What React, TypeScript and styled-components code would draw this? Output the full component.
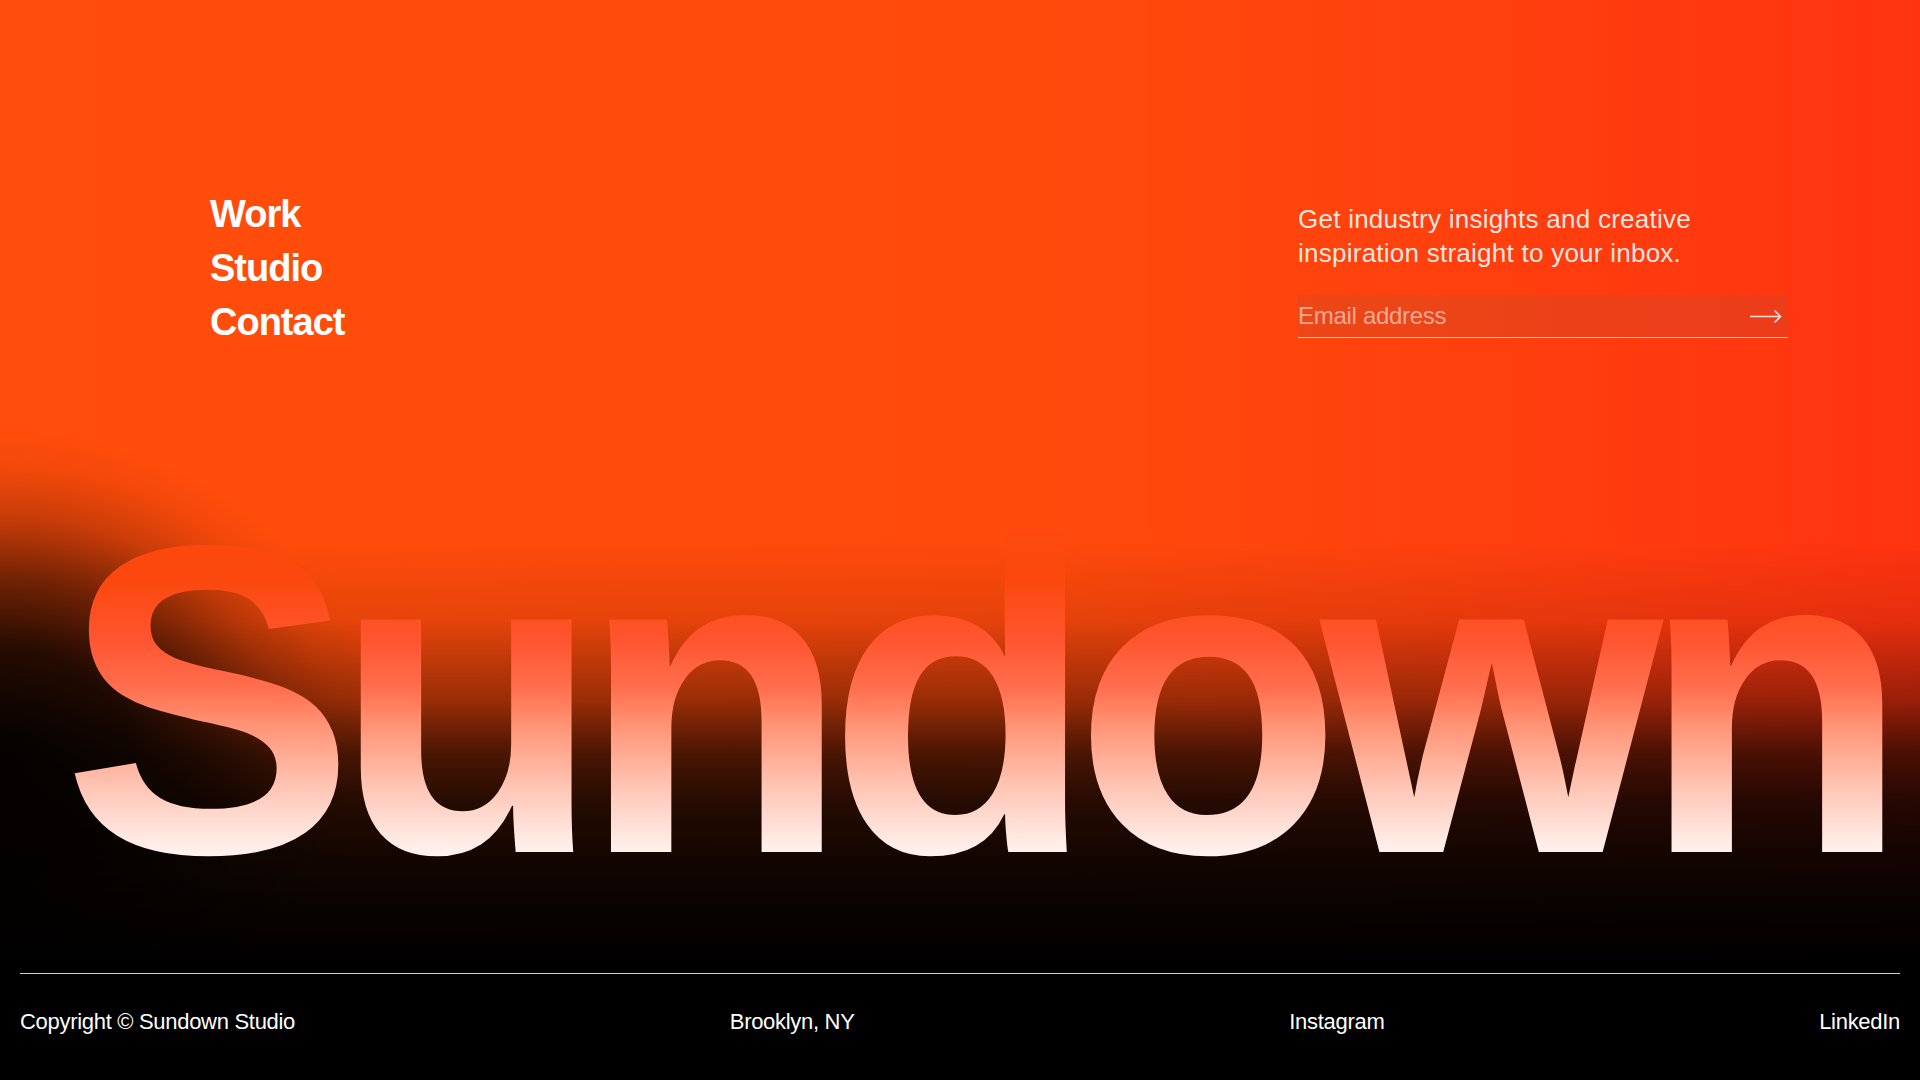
import React from "react";
import styled, { createGlobalStyle } from "styled-components";

const GlobalStyle = createGlobalStyle`
  *, *::before, *::after { box-sizing: border-box; }
  html, body { margin: 0; padding: 0; background: #000; }
  body {
    font-family: "Liberation Sans", Arial, Helvetica, sans-serif;
    color: #fff;
    -webkit-font-smoothing: antialiased;
  }
`;

const Page = styled.div`
  min-height: 100vh;
  display: flex;
  flex-direction: column;
  overflow: hidden;
  background:
    radial-gradient(
      ellipse 380px 330px at 0 760px,
      rgba(0, 0, 0, 0.95) 0%,
      rgba(0, 0, 0, 0.81) 34%,
      rgba(0, 0, 0, 0.53) 55%,
      rgba(0, 0, 0, 0.2) 75%,
      rgba(0, 0, 0, 0.05) 89%,
      rgba(0, 0, 0, 0) 100%
    ),
    linear-gradient(
      180deg,
      rgba(0, 0, 0, 0) 540px,
      rgba(0, 0, 0, 0.1) 620px,
      rgba(0, 0, 0, 0.4) 700px,
      rgba(0, 0, 0, 0.71) 753px,
      rgba(0, 0, 0, 0.85) 800px,
      rgba(0, 0, 0, 0.92) 853px,
      rgba(0, 0, 0, 0.96) 900px,
      #000 960px
    ),
    linear-gradient(90deg, #ff4d0b 0%, #ff4a0c 55%, #ff3f0e 78%, #ff3310 100%);
`;

const TopBar = styled.header`
  display: flex;
  justify-content: space-between;
  align-items: flex-start;
  padding: 187px 132px 0 210px;
`;

const NavList = styled.nav`
  display: flex;
  flex-direction: column;
`;

const NavLink = styled.a`
  font-size: 38px;
  line-height: 54px;
  font-weight: 700;
  letter-spacing: -1px;
  color: #fff;
  text-decoration: none;
`;

const Newsletter = styled.div`
  width: 490px;
  margin-top: 15px;
`;

const Blurb = styled.p`
  margin: 0 0 25px;
  font-size: 26px;
  line-height: 34px;
  letter-spacing: 0.25px;
  color: rgba(255, 255, 255, 0.88);
`;

const EmailForm = styled.form`
  display: flex;
  align-items: center;
  height: 43px;
  border-bottom: 1px solid rgba(255, 255, 255, 0.7);
  background: rgba(100, 100, 100, 0.12);
`;

const EmailInput = styled.input`
  flex: 1;
  min-width: 0;
  height: 42px;
  padding: 0;
  border: none;
  outline: none;
  background: transparent;
  font-family: inherit;
  font-size: 24px;
  letter-spacing: -0.3px;
  color: #fff;
  &::placeholder {
    color: rgba(255, 255, 255, 0.55);
  }
`;

const SubmitButton = styled.button`
  display: flex;
  align-items: center;
  padding: 0 6px 0 0;
  border: none;
  background: none;
  cursor: pointer;
`;

const Hero = styled.h1`
  margin: 131px 0 0 62px;
  font-size: 440px;
  line-height: 440px;
  font-weight: 700;
  letter-spacing: -22px;
  white-space: nowrap;
  color: transparent;
  background: linear-gradient(
    180deg,
    #ff4a0c 0px,
    #fb480e 100px,
    #ff5530 160px,
    #ff7050 210px,
    #ff8f70 240px,
    #ffc5b5 307px,
    #ffe8e2 357px,
    #fff5f2 380px
  );
  -webkit-background-clip: text;
  background-clip: text;
`;

const Footer = styled.footer`
  margin-top: auto;
  padding: 0 20px;
`;

const FooterRow = styled.div`
  display: flex;
  justify-content: space-between;
  border-top: 1px solid rgba(255, 255, 255, 0.8);
  padding: 35px 0 45px;
  font-size: 22px;
  line-height: 26px;
  letter-spacing: -0.3px;
`;

const FooterItem = styled.a`
  color: #fff;
  text-decoration: none;
`;

const ArrowIcon = () => (
  <svg width="32" height="14" viewBox="0 0 32 14" fill="none">
    <path
      d="M0 7.5H30.5M24.5 1.5L30.5 7.5L24.5 13.5"
      stroke="rgba(255,255,255,0.85)"
      strokeWidth="1.6"
    />
  </svg>
);

export default function App() {
  return (
    <>
      <GlobalStyle />
      <Page>
        <TopBar>
          <NavList>
            <NavLink href="#">Work</NavLink>
            <NavLink href="#">Studio</NavLink>
            <NavLink href="#">Contact</NavLink>
          </NavList>
          <Newsletter>
            <Blurb>
              Get industry insights and creative
              <br />
              inspiration straight to your inbox.
            </Blurb>
            <EmailForm onSubmit={(e) => e.preventDefault()}>
              <EmailInput type="email" placeholder="Email address" />
              <SubmitButton type="submit" aria-label="Subscribe">
                <ArrowIcon />
              </SubmitButton>
            </EmailForm>
          </Newsletter>
        </TopBar>
        <Hero>Sundown</Hero>
        <Footer>
          <FooterRow>
            <FooterItem>Copyright © Sundown Studio</FooterItem>
            <FooterItem>Brooklyn, NY</FooterItem>
            <FooterItem href="#">Instagram</FooterItem>
            <FooterItem href="#">LinkedIn</FooterItem>
          </FooterRow>
        </Footer>
      </Page>
    </>
  );
}
